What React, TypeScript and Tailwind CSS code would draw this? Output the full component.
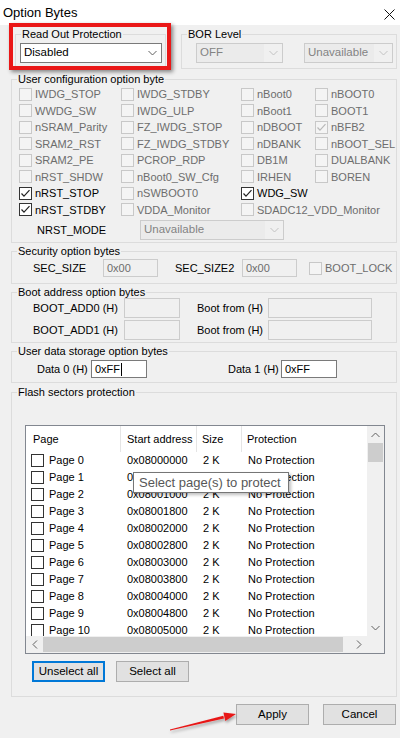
import React from "react";

type Cell = { t: string; on?: boolean; en?: boolean };

const configRows: Cell[][] = [
  [{ t: "IWDG_STOP" }, { t: "IWDG_STDBY" }, { t: "nBoot0" }, { t: "nBOOT0" }],
  [{ t: "WWDG_SW" }, { t: "IWDG_ULP" }, { t: "nBoot1" }, { t: "BOOT1" }],
  [{ t: "nSRAM_Parity" }, { t: "FZ_IWDG_STOP" }, { t: "nDBOOT" }, { t: "nBFB2", on: true }],
  [{ t: "SRAM2_RST" }, { t: "FZ_IWDG_STDBY" }, { t: "nDBANK" }, { t: "nBOOT_SEL" }],
  [{ t: "SRAM2_PE" }, { t: "PCROP_RDP" }, { t: "DB1M" }, { t: "DUALBANK" }],
  [{ t: "nRST_SHDW" }, { t: "nBoot0_SW_Cfg" }, { t: "IRHEN" }, { t: "BOREN" }],
  [{ t: "nRST_STOP", on: true, en: true }, { t: "nSWBOOT0" }, { t: "WDG_SW", on: true, en: true }],
  [{ t: "nRST_STDBY", on: true, en: true }, { t: "VDDA_Monitor" }, { t: "SDADC12_VDD_Monitor" }],
];

const colWidths = ["w-[102px]", "w-[120px]", "w-[74px]", "flex-1"];

const pages = Array.from({ length: 11 }, (_, i) => ({
  name: `Page ${i}`,
  addr: "0x" + (0x08000000 + i * 0x800).toString(16).toUpperCase().padStart(8, "0"),
}));

function Check({ on, en }: { on?: boolean; en?: boolean }) {
  return (
    <span
      className={
        "flex h-[13px] w-[13px] shrink-0 items-center justify-center border " +
        (en ? "border-[#333333] bg-white" : "border-[#c8c8c8] bg-[#f4f4f4]")
      }
    >
      {on && (
        <svg width="11" height="11" viewBox="0 0 11 11">
          <polyline
            points="1.5,5.5 4,8.2 9.5,2.2"
            fill="none"
            stroke={en ? "#222222" : "#b8b8b8"}
            strokeWidth="1.2"
          />
        </svg>
      )}
    </span>
  );
}

function Chevron({ color = "#606060", up }: { color?: string; up?: boolean }) {
  return (
    <svg width="9" height="6" viewBox="0 0 9 6">
      <polyline
        points={up ? "0.5,5 4.5,1 8.5,5" : "0.5,1 4.5,5 8.5,1"}
        fill="none"
        stroke={color}
        strokeWidth="1"
      />
    </svg>
  );
}

function Combo({ text, disabled, className }: { text: string; disabled?: boolean; className: string }) {
  return (
    <div
      className={
        "flex h-[20px] items-center border " +
        (disabled ? "border-[#cccccc] bg-[#f0f0f0] text-[#838383]" : "border-[#7a7a7a] bg-white text-black") +
        " " +
        className
      }
    >
      <span className={"flex h-full flex-1 items-center pl-[3px] text-[11.5px] " + (disabled ? "mr-[19px] bg-[#ebebeb]" : "")}>
        {text}
      </span>
      <span className={"flex w-[18px] justify-center " + (disabled ? "-ml-[19px]" : "")}>
        <Chevron color={disabled ? "#c2c2c2" : "#606060"} />
      </span>
    </div>
  );
}

function Field({ text, disabled, caret, className }: { text?: string; disabled?: boolean; caret?: boolean; className: string }) {
  return (
    <div
      className={
        "flex items-center border pl-[3px] text-[11px] " +
        (disabled ? "border-[#cccccc] bg-[#f0f0f0] text-[#6d6d6d]" : "border-[#7a7a7a] bg-white text-black") +
        " " +
        className
      }
    >
      {text}
      {caret && <span className="ml-[1px] h-[13px] w-[1px] bg-black" />}
    </div>
  );
}

function Group({ title, className, children }: { title: string; className: string; children: React.ReactNode }) {
  return (
    <fieldset className={"border border-[#dcdcdc] " + className}>
      <legend className="ml-[5px] px-[1px] text-[11px] leading-[12px] text-black">{title}</legend>
      {children}
    </fieldset>
  );
}

function Button({ label, focused, className }: { label: string; focused?: boolean; className: string }) {
  return (
    <div
      className={
        "flex h-[21px] w-[73px] items-center justify-center bg-[#e1e1e1] text-[11.5px] text-black " +
        (focused ? "border-2 border-[#0078d7]" : "border border-[#adadad]") +
        " " +
        className
      }
    >
      {label}
    </div>
  );
}

export default function App() {
  return (
    <div className="relative h-[738px] w-[400px] overflow-hidden bg-[#f0f0f0] font-['Liberation_Sans',Arial,sans-serif] text-[11px] text-black">
      <div className="flex h-[25px] items-center justify-between bg-white pl-[3px] pr-[4px]">
        <span className="text-[13px]">Option Bytes</span>
        <svg width="11" height="11" viewBox="0 0 11 11" className="mr-[1px] mt-[3px]">
          <path d="M0.5 0.5 L10.5 10.5 M10.5 0.5 L0.5 10.5" stroke="#111111" strokeWidth="1" />
        </svg>
      </div>

      <div className="mt-[3px] flex">
        <Group title="Read Out Protection" className="ml-[15px] w-[151px] pb-[5px]">
          <div className="pl-[4px]">
            <Combo text="Disabled" className="mt-[3px] w-[142px]" />
          </div>
        </Group>
        <Group title="BOR Level" className="ml-[15px] w-[216px] pb-[5px]">
          <div className="mt-[3px] flex">
            <Combo text="OFF" disabled className="ml-[14px] w-[87px]" />
            <Combo text="Unavailable" disabled className="ml-[21px] w-[89px]" />
          </div>
        </Group>
      </div>

      <Group title="User configuration option byte" className="ml-[11px] mt-[4px] w-[386px] pb-[2px]">
        <div className="mt-[1px] flex flex-col pl-[7px]">
          {configRows.map((row, ri) => (
            <div key={ri} className="flex h-[16.5px] items-center">
              {colWidths.map((w, ci) => {
                const c = row[ci];
                return (
                  <div key={ci} className={"flex items-center gap-[3px] whitespace-nowrap " + w}>
                    {c && (
                      <>
                        <Check on={c.on} en={c.en} />
                        <span className={c.en ? "text-black" : "text-[#6d6d6d]"}>{c.t}</span>
                      </>
                    )}
                  </div>
                );
              })}
            </div>
          ))}
        </div>
        <div className="mt-[2px] flex h-[20px] items-center pl-[7px]">
          <span className="w-[121px] pl-[18px]">NRST_MODE</span>
          <Combo text="Unavailable" disabled className="w-[144px]" />
        </div>
      </Group>

      <Group title="Security option bytes" className="ml-[11px] mt-[2px] w-[386px] pb-[6px]">
        <div className="mt-[2px] flex h-[18px] items-center pl-[21px]">
          <span className="w-[70px]">SEC_SIZE</span>
          <Field text="0x00" disabled className="h-[18px] w-[55px]" />
          <span className="ml-[17px] w-[67px]">SEC_SIZE2</span>
          <Field text="0x00" disabled className="h-[18px] w-[55px]" />
          <span className="ml-[12px] flex items-center gap-[3px]">
            <Check />
            <span className="text-[#6d6d6d]">BOOT_LOCK</span>
          </span>
        </div>
      </Group>

      <Group title="Boot address option bytes" className="ml-[11px] mt-[2px] w-[386px] pb-[2px]">
        <div className="flex flex-col gap-[2px] pl-[21px]">
          {["BOOT_ADD0 (H)", "BOOT_ADD1 (H)"].map((l) => (
            <div key={l} className="flex h-[20px] items-center">
              <span className="w-[91px]">{l}</span>
              <Field disabled className="h-[20px] w-[56px]" />
              <span className="ml-[17px] w-[71px]">Boot from (H)</span>
              <Field disabled className="h-[20px] w-[104px]" />
            </div>
          ))}
        </div>
      </Group>

      <Group title="User data storage option bytes" className="ml-[11px] mt-[2px] w-[386px] pb-[4px]">
        <div className="mt-[3px] flex h-[18px] items-center pl-[25px]">
          <span className="w-[54px]">Data 0 (H)</span>
          <Field text="0xFF" caret className="h-[18px] w-[56px]" />
          <span className="ml-[81px] w-[53px]">Data 1 (H)</span>
          <Field text="0xFF" className="h-[18px] w-[56px]" />
        </div>
      </Group>

      <Group title="Flash sectors protection" className="ml-[11px] mt-[3px] w-[386px] pb-[14px]">
        <div className="ml-[13px] mt-[27px] flex h-[229px] w-[360px] flex-col border border-[#828790] bg-white">
          <div className="flex h-[210px]">
            <div className="flex w-[341px] flex-col overflow-hidden">
              <div className="flex h-[26px] shrink-0 items-stretch">
                <div className="flex w-[95px] items-center border-r border-[#e5e5e5] pl-[7px]">Page</div>
                <div className="flex w-[76px] items-center border-r border-[#e5e5e5] pl-[6px]">Start address</div>
                <div className="flex w-[45px] items-center border-r border-[#e5e5e5] pl-[5px]">Size</div>
                <div className="flex flex-1 items-center pl-[5px]">Protection</div>
              </div>
              {pages.map((p) => (
                <div key={p.name} className="flex h-[17px] shrink-0 items-center">
                  <div className="flex w-[95px] items-center gap-[5px] pl-[5px]">
                    <Check en />
                    <span>{p.name}</span>
                  </div>
                  <div className="w-[76px] pl-[6px]">{p.addr}</div>
                  <div className="w-[45px] pl-[6px]">2 K</div>
                  <div className="flex-1 pl-[6px]">No Protection</div>
                </div>
              ))}
            </div>
            <div className="flex w-[17px] flex-col bg-[#f0f0f0]">
              <div className="flex h-[17px] items-center justify-center">
                <Chevron up />
              </div>
              <div className="mx-[1px] h-[19px] bg-[#cdcdcd]" />
              <div className="flex-1" />
              <div className="flex h-[17px] items-center justify-center">
                <Chevron />
              </div>
            </div>
          </div>
          <div className="flex h-[17px] bg-[#f0f0f0]">
            <div className="flex w-[341px] items-center">
              <div className="flex w-[17px] justify-center">
                <svg width="6" height="9" viewBox="0 0 6 9">
                  <polyline points="5,0.5 1,4.5 5,8.5" fill="none" stroke="#606060" />
                </svg>
              </div>
              <div className="h-[15px] w-[300px] bg-[#cdcdcd]" />
              <div className="flex-1" />
              <div className="flex w-[17px] justify-center">
                <svg width="6" height="9" viewBox="0 0 6 9">
                  <polyline points="1,0.5 5,4.5 1,8.5" fill="none" stroke="#606060" />
                </svg>
              </div>
            </div>
            <div className="w-[17px]" />
          </div>
        </div>
        <div className="mt-[7px] flex">
          <Button label="Unselect all" focused className="ml-[20px]" />
          <Button label="Select all" className="ml-[11px]" />
        </div>
      </Group>

      <div className="mt-[7px] flex">
        <Button label="Apply" className="ml-[236px]" />
        <Button label="Cancel" className="ml-[14px]" />
      </div>

      {/* overlays: highlight box, tooltip, arrow */}
      <div className="pointer-events-none absolute left-[9px] top-[23px] h-[47px] w-[162px] border-[4px] border-[#ea1717] shadow-[2px_2px_4px_rgba(0,0,0,0.45)]" />

      <div className="absolute left-[133px] top-[472px] flex h-[21px] w-[156px] items-center border border-[#767676] bg-white pl-[5px] text-[13px] text-[#575757] shadow-[2px_2px_3px_rgba(0,0,0,0.25)]">
        Select page(s) to protect
      </div>

      <svg className="pointer-events-none absolute left-0 top-0" width="400" height="738">
        <defs>
          <filter id="sh" x="-20%" y="-50%" width="140%" height="200%">
            <feDropShadow dx="1" dy="2" stdDeviation="1.5" floodColor="#000" floodOpacity="0.35" />
          </filter>
        </defs>
        <g filter="url(#sh)">
          <polygon points="170,730.5 224,718.6 223.3,715.8 170,729.5" fill="#e81818" />
          <polygon points="236,714 223.4,712.4 225.3,721" fill="#e81818" />
        </g>
      </svg>
    </div>
  );
}
